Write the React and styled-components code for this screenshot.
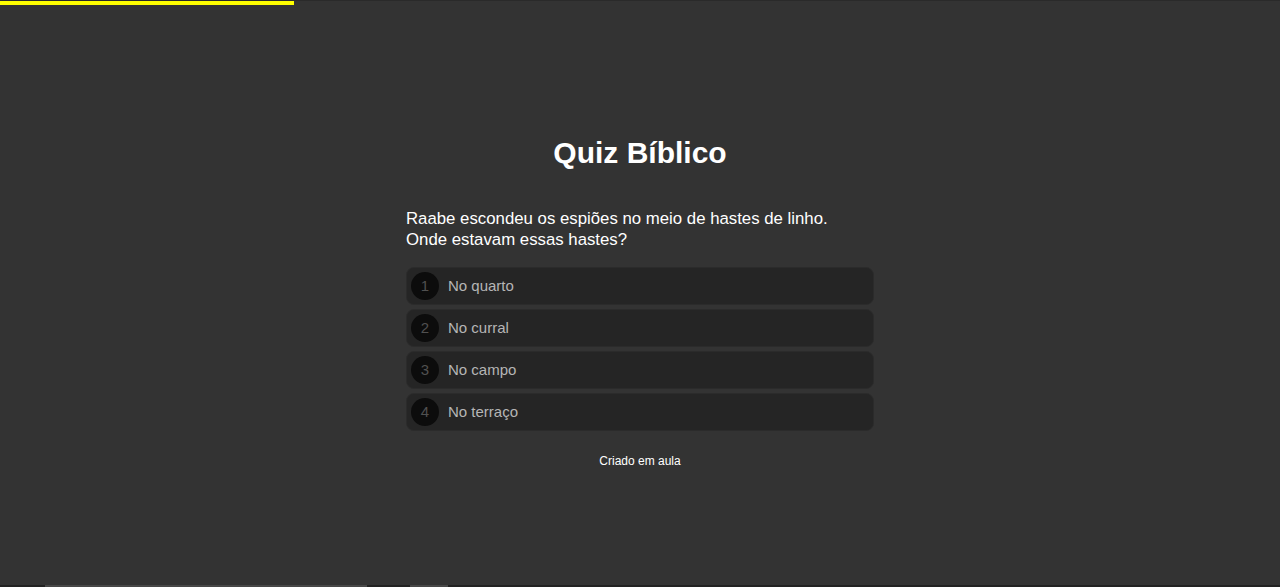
import React from "react";
import styled, { createGlobalStyle } from "styled-components";

const Global = createGlobalStyle`
  html, body { margin: 0; padding: 0; background: #333333; }
  body { font-family: Arial, "Liberation Sans", Helvetica, sans-serif; color: #fff; overflow: hidden; }
`;

const Page = styled.div`
  height: 587px;
  display: flex;
  flex-direction: column;
  position: relative;
  background: #333333;
`;

const ProgressTrack = styled.div`
  height: 5px;
  border-top: 1px solid #2a2a2a;
  box-sizing: border-box;
  display: flex;
`;

const ProgressFill = styled.div`
  height: 4px;
  background: #ffff00;
`;

const Main = styled.main`
  width: 468px;
  margin: 0 auto;
  padding-top: 130px;
  display: flex;
  flex-direction: column;
`;

const Title = styled.h1`
  margin: 0;
  font-size: 30px;
  line-height: 35px;
  font-weight: 700;
  text-align: center;
  color: #ffffff;
`;

const Question = styled.p`
  margin: 38px 0 17px;
  font-size: 16.8px;
  line-height: 21px;
  color: #ffffff;
`;

const Options = styled.div`
  display: flex;
  flex-direction: column;
  gap: 4px;
`;

const Option = styled.button`
  display: flex;
  align-items: center;
  gap: 9px;
  height: 38px;
  padding: 0 4px 1px;
  box-sizing: border-box;
  border: 1px solid #2b2b2b;
  border-radius: 8px;
  background: #252525;
  font-family: inherit;
  font-size: 15px;
  color: #b5b5b5;
  text-align: left;
  cursor: pointer;
`;

const Number = styled.span`
  width: 28px;
  height: 28px;
  margin-top: 1px;
  border-radius: 50%;
  background: #0c0c0c;
  color: #505050;
  font-size: 15px;
  line-height: 26px;
  display: flex;
  align-items: center;
  justify-content: center;
  flex-shrink: 0;
`;

const Footer = styled.footer`
  margin-top: 23px;
  font-size: 12px;
  line-height: 14px;
  text-align: center;
  color: #ffffff;
`;

const BottomStrip = styled.div`
  position: absolute;
  left: 0;
  right: 0;
  bottom: 0;
  height: 2px;
  background: #222222;
`;

const StripThumb = styled.div`
  position: absolute;
  top: 0;
  height: 2px;
  background: #474747;
`;

const options = ["No quarto", "No curral", "No campo", "No terraço"];

export default function App() {
  return (
    <>
      <Global />
      <Page>
        <ProgressTrack>
          <ProgressFill style={{ width: "294px" }} />
        </ProgressTrack>
        <Main>
          <Title>Quiz Bíblico</Title>
          <Question>
            Raabe escondeu os espiões no meio de hastes de linho.
            <br />
            Onde estavam essas hastes?
          </Question>
          <Options>
            {options.map((o, i) => (
              <Option key={o}>
                <Number>{i + 1}</Number>
                {o}
              </Option>
            ))}
          </Options>
          <Footer>Criado em aula</Footer>
        </Main>
        <BottomStrip>
          <StripThumb style={{ left: 45, width: 322 }} />
          <StripThumb style={{ left: 410, width: 38 }} />
        </BottomStrip>
      </Page>
    </>
  );
}
